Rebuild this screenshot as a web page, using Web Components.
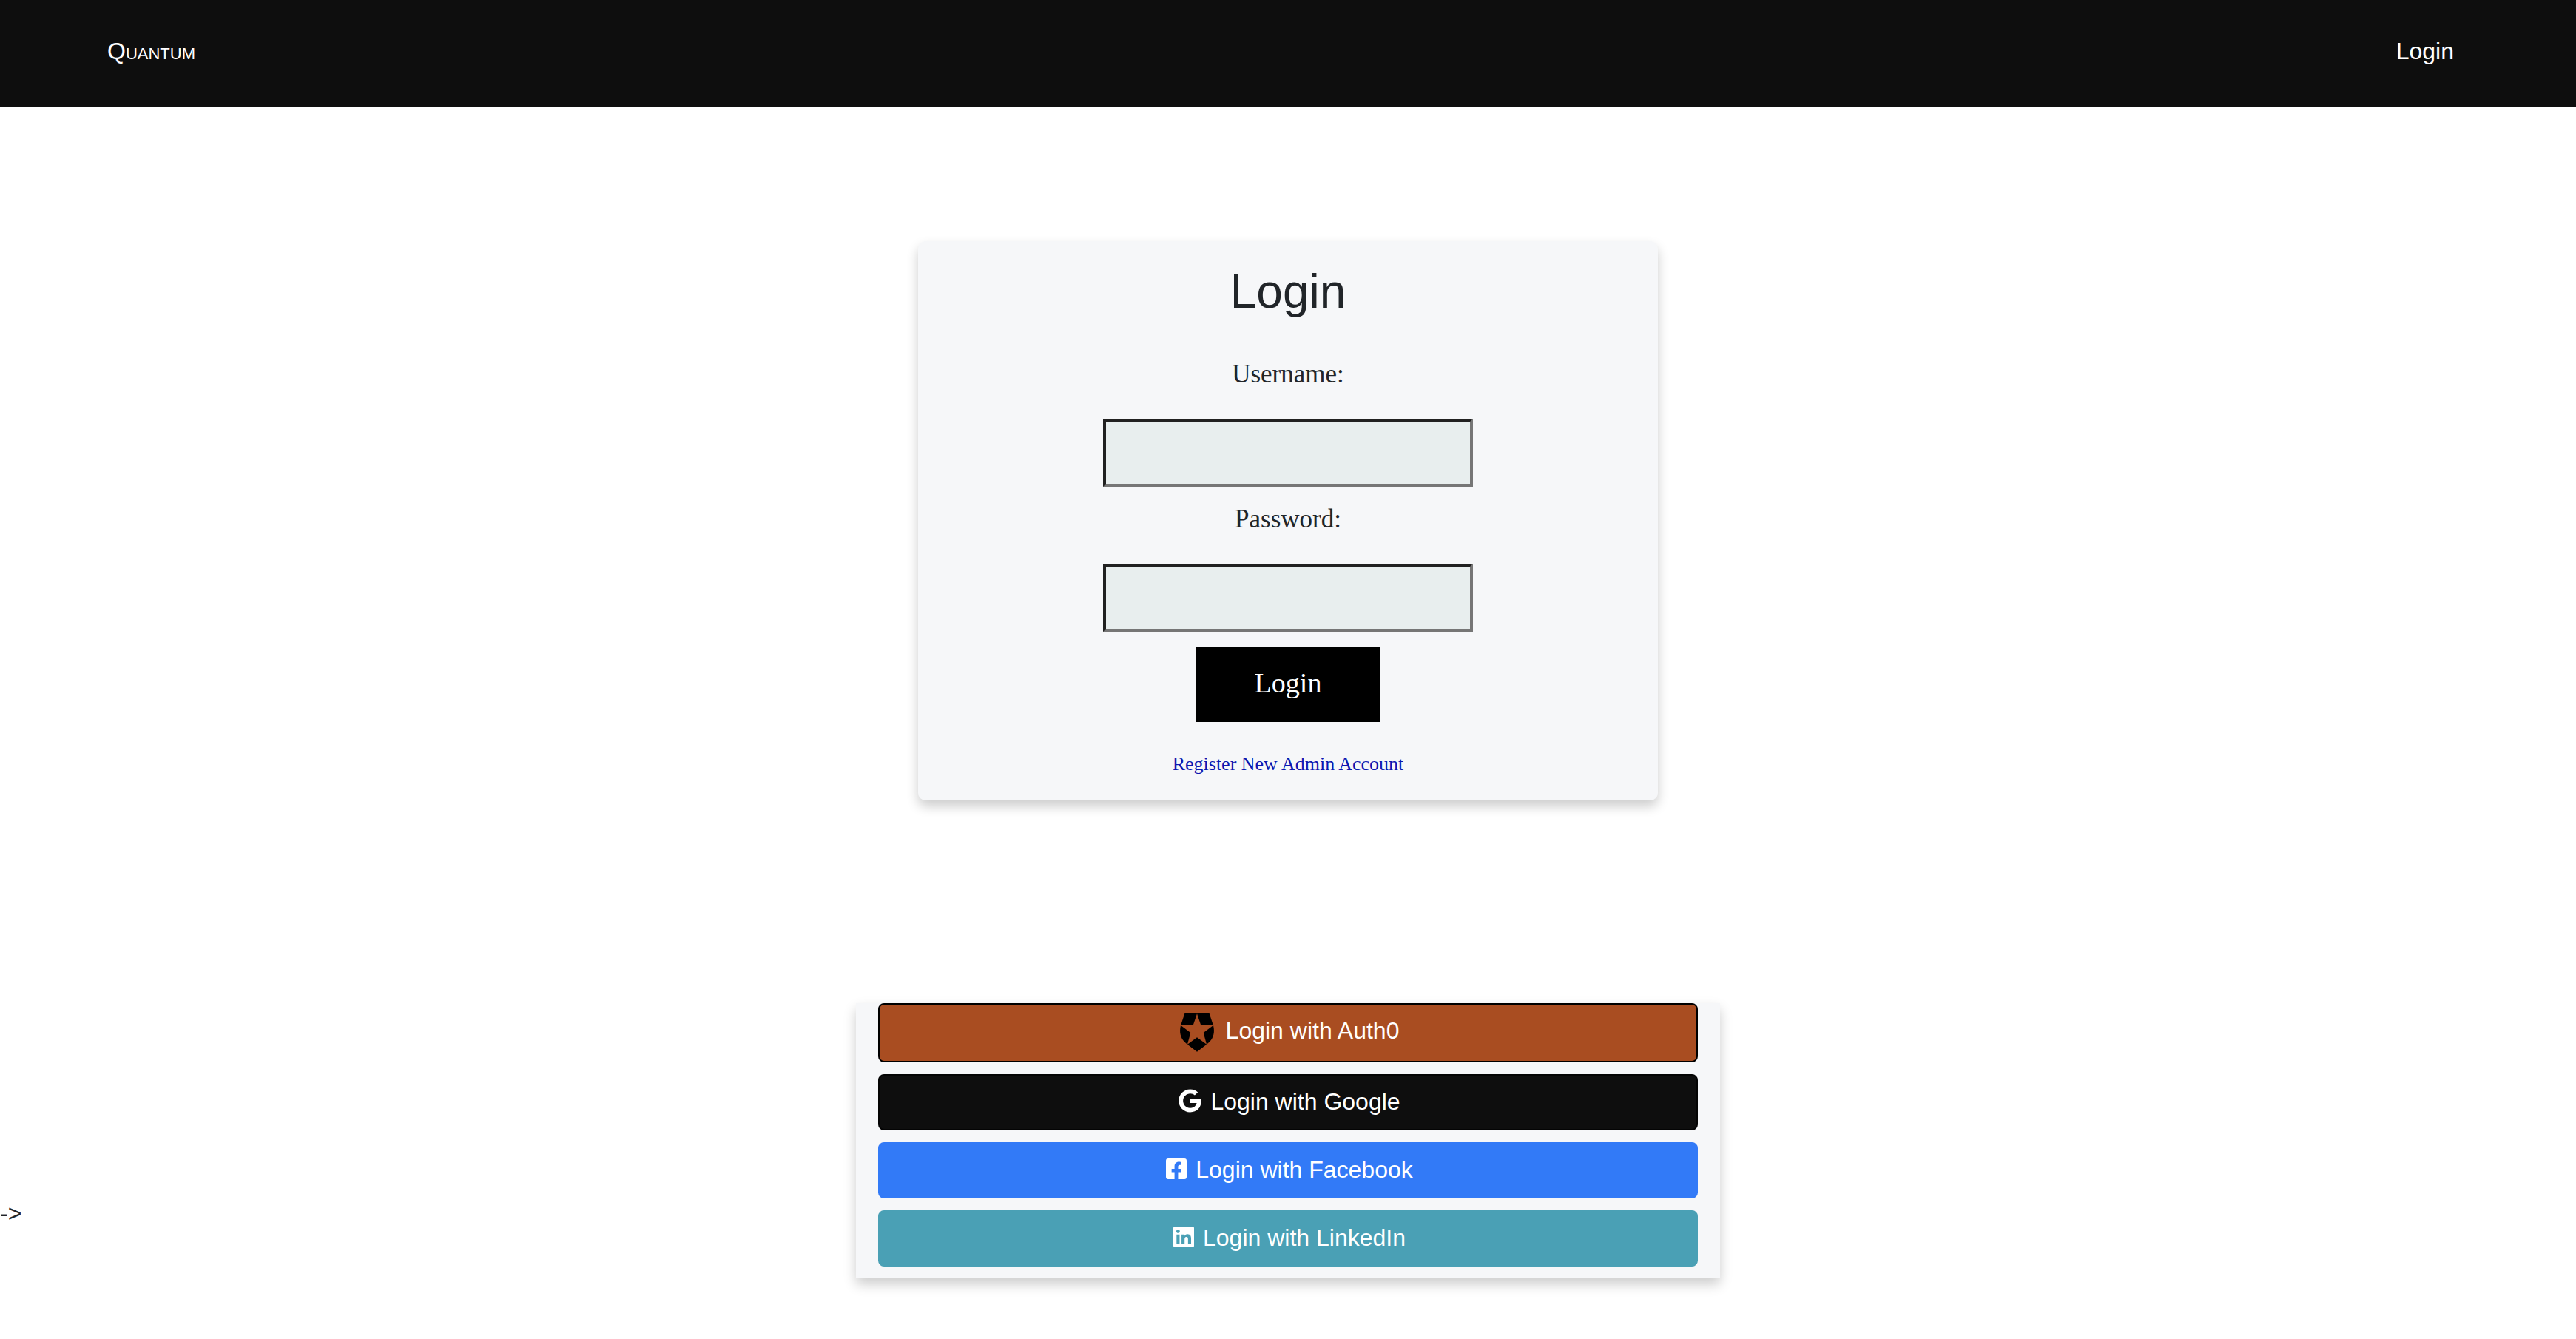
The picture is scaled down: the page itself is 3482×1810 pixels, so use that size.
<!DOCTYPE html>
<html lang="en">
<head>
<meta charset="utf-8">
<meta name="viewport" content="width=device-width, initial-scale=1">
<title>Quantum - Login</title>
<style>
  :root {
    --ink: #212529;
    --panel: #f6f7f9;
    --dark: #0e0e0e;
    --sans: "Liberation Sans", Arial, sans-serif;
    --serif: "Liberation Serif", serif;
    --lift: 0 8px 16px rgba(0, 0, 0, .2);
  }
  body { margin: 0; min-height: 100vh; background: #fff; color: var(--ink); font: 32px/48px var(--sans); }
</style>
</head>
<body>
<quantum-page></quantum-page>

<template id="t-page">
  <style>
    :host { display: block; }
    main { padding: 182px 0 80px; }
    login-card { width: 1000px; max-width: 100%; margin: 0 auto 274px; }
    .social { display: grid; grid-template-columns: 1fr minmax(0, 1168px) 1fr; }
    .stray { align-self: end; margin-bottom: 64px; }
  </style>
  <quantum-nav>Quantum<a slot="links" href="#login">Login</a></quantum-nav>
  <main>
    <login-card></login-card>
    <div class="social">
      <span class="stray">-&gt;</span>
      <social-panel></social-panel>
    </div>
  </main>
</template>

<template id="t-nav">
  <style>
    :host { display: block; background: var(--dark); }
    nav { display: flex; justify-content: space-between; padding: 45px 165px 51px 145px; }
    .brand { color: #fff; text-decoration: none; font-variant: small-caps; }
    ::slotted(a) { color: #fff; text-decoration: none; }
  </style>
  <nav><a class="brand" href="#home"><slot></slot></a><slot name="links"></slot></nav>
</template>

<template id="t-card">
  <style>
    :host { display: block; box-sizing: border-box; padding: 30px; border-radius: 10px; background: var(--panel); box-shadow: var(--lift); font-family: var(--serif); }
    form { display: flex; flex-direction: column; align-items: center; }
    h1 { margin: 0 0 50px; font: 400 64px/76px var(--sans); }
    login-field + login-field { margin-top: 20px; }
    button { width: 250px; height: 102px; margin: 20px 0 38px; padding: 0 0 4px; border: 0; background: #000; color: #fff; font: 38px/48px var(--serif); cursor: pointer; }
    a { color: #0c17b1; font-size: 26px; line-height: 38px; text-decoration: none; }
  </style>
  <form>
    <h1>Login</h1>
    <login-field name="username" type="text">Username:</login-field>
    <login-field name="password" type="password">Password:</login-field>
    <button type="button">Login</button>
    <a href="#register">Register New Admin Account</a>
  </form>
</template>

<template id="t-field">
  <style>
    :host { display: flex; flex-direction: column; align-items: center; gap: 36px; }
    label { font-size: 35px; line-height: 48px; }
    input { box-sizing: border-box; width: 500px; height: 92px; padding: 0 16px; border: 4px solid; border-color: #212121 #767676 #767676 #212121; border-radius: 0; background: #e8eeee; font: 35px/48px var(--serif); color: var(--ink); }
  </style>
  <label for="box"><slot></slot></label>
  <input id="box">
</template>

<template id="t-social">
  <style>
    :host { display: flex; flex-direction: column; gap: 16px; padding: 0 30px 16px; background: var(--panel); box-shadow: var(--lift); }
    .auth0 { --fill: #a94d21; --edge: #000; }
    .google { --fill: #0e0e0e; --edge: #040404; }
    .facebook { --fill: #327af7; --edge: #327af7; }
    .linkedin { --fill: #4aa0b5; --edge: #4aa0b5; }
    .glyph { height: 32px; margin-top: 6px; fill: #fff; }
  </style>
  <social-button class="auth0" to="#auth0">
    <svg slot="icon" width="50" height="52" viewBox="132 90 150 156" aria-hidden="true"><path fill="#000" fill-rule="evenodd" d="M151 90H251L267 138C275 170 266 196 240 215L201 245L162 215C136 196 127 170 135 138ZM201 91L185 138H135L175 168L162 215L201 187L240 215L227 168L267 138H217Z"/></svg>Login with Auth0</social-button>
  <social-button class="google" to="#google">
    <svg slot="icon" class="glyph" width="31" viewBox="0 0 488 512" aria-hidden="true"><path d="M488 261.8C488 403.3 391.1 504 248 504 110.8 504 0 393.2 0 256S110.8 8 248 8c66.8 0 123 24.5 166.3 64.9l-67.5 64.9C258.5 52.6 94.3 116.6 94.3 256c0 86.5 69.1 156.6 153.7 156.6 98.2 0 135-70.4 140.8-106.9H248v-85.3h236.1c2.3 12.7 3.9 24.9 3.9 41.4z"/></svg>Login with Google</social-button>
  <social-button class="facebook" to="#facebook">
    <svg slot="icon" class="glyph" width="28" viewBox="0 0 448 512" aria-hidden="true"><path d="M400 32H48A48 48 0 0 0 0 80v352a48 48 0 0 0 48 48h137.25V327.69h-63V256h63v-54.64c0-62.15 37-96.48 93.67-96.48 27.14 0 55.52 4.84 55.52 4.84v61h-31.27c-30.81 0-40.42 19.12-40.42 38.73V256h68.78l-11 71.69h-57.78V480H400a48 48 0 0 0 48-48V80a48 48 0 0 0-48-48z"/></svg>Login with Facebook</social-button>
  <social-button class="linkedin" to="#linkedin">
    <svg slot="icon" class="glyph" width="28" viewBox="0 0 448 512" aria-hidden="true"><path d="M416 32H31.9C14.3 32 0 46.5 0 64.3v383.4C0 465.5 14.3 480 31.9 480H416c17.6 0 32-14.5 32-32.3V64.3c0-17.8-14.4-32.3-32-32.3zM135.4 416H69V202.2h66.5V416zm-33.2-243c-21.3 0-38.5-17.3-38.5-38.5S80.9 96 102.2 96c21.2 0 38.5 17.3 38.5 38.5 0 21.3-17.2 38.5-38.5 38.5zm282.1 243h-66.4V312c0-24.8-.5-56.7-34.5-56.7-34.6 0-39.9 27-39.9 54.9V416h-66.4V202.2h63.7v29.2h.9c8.9-16.8 30.6-34.5 62.9-34.5 67.2 0 79.7 44.3 79.7 101.9V416z"/></svg>Login with LinkedIn</social-button>
</template>

<template id="t-button">
  <style>
    :host { display: block; }
    a { display: flex; justify-content: center; align-items: flex-start; gap: 12px; padding: 12px 22px 12px 26px; border: 2px solid var(--edge); border-radius: 8px; background: var(--fill); color: #fff; text-decoration: none; }
    span { padding-bottom: 2px; line-height: 46px; }
  </style>
  <a><slot name="icon"></slot><span><slot></slot></span></a>
</template>

<script>
  class Part extends HTMLElement {
    constructor() {
      super();
      const source = document.getElementById(this.constructor.template);
      this.attachShadow({ mode: "open" }).append(source.content.cloneNode(true));
    }
  }
  class QuantumNav extends Part { static template = "t-nav"; }
  class LoginField extends Part {
    static template = "t-field";
    connectedCallback() {
      const input = this.shadowRoot.querySelector("input");
      input.type = this.getAttribute("type");
      input.name = this.getAttribute("name");
    }
  }
  class LoginCard extends Part { static template = "t-card"; }
  class SocialButton extends Part {
    static template = "t-button";
    connectedCallback() {
      this.shadowRoot.querySelector("a").setAttribute("href", this.getAttribute("to"));
    }
  }
  class SocialPanel extends Part { static template = "t-social"; }
  class QuantumPage extends Part { static template = "t-page"; }

  customElements.define("quantum-nav", QuantumNav);
  customElements.define("login-field", LoginField);
  customElements.define("login-card", LoginCard);
  customElements.define("social-button", SocialButton);
  customElements.define("social-panel", SocialPanel);
  customElements.define("quantum-page", QuantumPage);
</script>
</body>
</html>
